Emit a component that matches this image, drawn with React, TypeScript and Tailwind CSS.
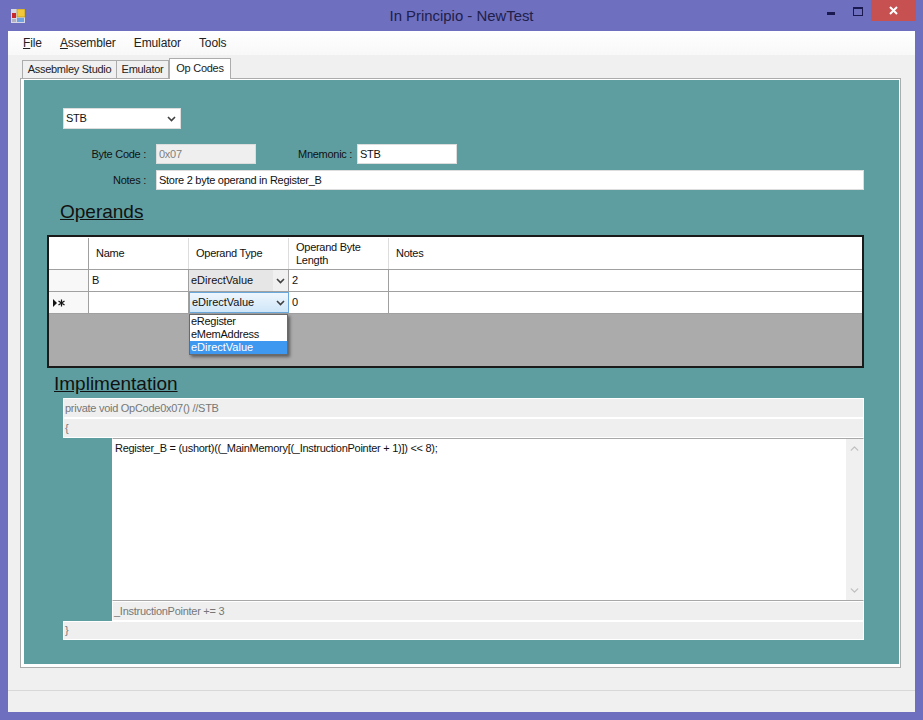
import { ChevronDown, ChevronUp } from 'lucide-react'

const font = "[font-family:'Liberation_Sans',Arial,sans-serif]"

function Chevron() {
  return (
    <svg width="9" height="6" viewBox="0 0 9 6" className="shrink-0">
      <path d="M1 1 L4.5 4.5 L8 1" fill="none" stroke="#404040" strokeWidth="1.6" />
    </svg>
  )
}

function TextBox({ className, value, disabled }: { className: string; value: string; disabled?: boolean }) {
  return (
    <div
      className={`flex h-[20px] items-center border border-[#ddd] pl-[2px] ${disabled ? 'bg-[#efefef] text-[#808080]' : 'bg-white text-[#111]'} ${className}`}
    >
      {value}
    </div>
  )
}

function GreyLine({ text, className }: { text: string; className: string }) {
  return (
    <div className={`flex items-center border border-[#fff] bg-[#efefef] pl-[1px] text-[#777] ${className}`}>
      {text}
    </div>
  )
}

const cols = 'grid grid-cols-[40px_100px_100px_100px_1fr]'

export default function App() {
  return (
    <div className={`flex h-[720px] w-[923px] flex-col overflow-hidden bg-[#6f6fbf] text-[11px] tracking-[-0.27px] text-[#111] ${font}`}>
      {/* title bar */}
      <div className="relative flex h-[31px] shrink-0 items-start">
        <svg width="14" height="14" viewBox="0 0 14 14" className="ml-[11px] mt-[9px]">
          <rect x="0" y="0" width="14" height="14" fill="#d8d8e4" />
          <rect x="6" y="0" width="8" height="8" fill="#f2c83a" stroke="#a88a20" strokeWidth="0.6" />
          <rect x="1" y="4" width="4" height="5" fill="#c8282c" />
          <rect x="6" y="9" width="7" height="4" fill="#6fa0e0" />
          <rect x="1" y="10" width="4" height="3" fill="#b0b0c0" />
        </svg>
        <div className="absolute inset-x-0 top-[8px] text-center text-[14.9px] leading-[16px] tracking-normal text-[#20204a]">In Principio - NewTest</div>
        <div className="ml-auto flex items-start">
          <div className="mr-[18px] mt-[12px] h-[3px] w-[8px] bg-[#1a1a50]" />
          <div className="mr-[8px] mt-[7px] h-[9px] w-[10px] border border-t-2 border-[#1a1a50]" />
          <div className="mr-[7px] flex h-[21px] w-[45px] items-center justify-center bg-[#c75050]">
            <svg width="9" height="9" viewBox="0 0 9 9">
              <path d="M1 1 L8 8 M8 1 L1 8" stroke="#fff" strokeWidth="2" />
            </svg>
          </div>
        </div>
      </div>

      {/* client area */}
      <div className="mx-[8px] mb-[8px] flex min-h-0 flex-1 flex-col bg-[#f0f0f0]">
        <div className="flex h-[24px] shrink-0 items-center gap-[18px] bg-gradient-to-b from-white to-[#f8f8f8] pl-[15px] text-[12px] tracking-[-0.1px] text-[#222]">
          <span><span className="underline">F</span>ile</span>
          <span><span className="underline">A</span>ssembler</span>
          <span>Emulator</span>
          <span>Tools</span>
        </div>

        {/* tabs */}
        <div className="z-10 -mb-[1px] mt-[3px] flex h-[21px] shrink-0 items-end pl-[14px] text-[#222]">
          <div className="mb-[1px] flex h-[18px] w-[95px] items-center justify-center border border-b-0 border-[#acacac] bg-[#f0f0f0]">Assebmley Studio</div>
          <div className="mb-[1px] flex h-[18px] w-[52px] items-center justify-center border border-b-0 border-l-0 border-[#acacac] bg-[#f0f0f0]">Emulator</div>
          <div className="flex h-[21px] w-[62px] items-center justify-center border border-b-0 border-[#acacac] bg-white pb-[1px]">Op Codes</div>
        </div>

        {/* tab page */}
        <div className="mx-[12px] h-[590px] w-[881px] shrink-0 border border-[#acacac] bg-white pb-[3px] pl-[3px] pr-[1px] pt-[1px]">
          <div className="relative h-[584px] bg-[#5f9ea0] pl-[39px] pt-[28px]">
            <div className="flex h-[21px] w-[118px] items-center justify-between border border-[#ddd] bg-white pl-[2px] pr-[4px]">
              STB
              <Chevron />
            </div>

            <div className="mt-[15px] flex items-center">
              <div className="w-[83px] whitespace-nowrap text-right">Byte Code :</div>
              <TextBox className="ml-[10px] w-[100px]" value="0x07" disabled />
              <div className="ml-[42px] w-[59px] whitespace-nowrap">Mnemonic :</div>
              <TextBox className="w-[100px]" value="STB" />
            </div>
            <div className="mt-[6px] flex items-center">
              <div className="w-[83px] text-right">Notes :</div>
              <TextBox className="ml-[10px] w-[708px]" value="Store 2 byte operand in Register_B" />
            </div>

            <div className="ml-[-3px] mt-[11px] text-[19px] leading-[22px] tracking-normal text-[#111] underline">Operands</div>

            {/* operands grid */}
            <div className="relative ml-[-16px] mt-[12px] h-[133px] w-[817px] border-2 border-[#1a1a1a] bg-[#ababab]">
              <div className={`${cols} h-[33px] border-b border-[#a0a0a0] bg-white pt-[1px]`}>
                <div className="border-r border-[#a0a0a0]" />
                <div className="flex items-center border-r border-[#ddd] pl-[7px]">Name</div>
                <div className="flex items-center border-r border-[#ddd] pl-[7px]">Operand Type</div>
                <div className="flex items-center border-r border-[#ddd] pl-[7px] leading-[13px]">
                  Operand Byte<br />Length
                </div>
                <div className="flex items-center pl-[7px]">Notes</div>
              </div>
              <div className={`${cols} h-[22px] border-b border-[#a0a0a0] bg-white`}>
                <div className="border-r border-[#a0a0a0] bg-[#f8f8f8]" />
                <div className="flex items-center border-r border-[#a0a0a0] pl-[3px]">B</div>
                <div className="flex items-stretch border-r border-[#a0a0a0] bg-[#e6e6e6] tracking-normal">
                  <div className="flex flex-1 items-center pl-[2px]">eDirectValue</div>
                  <div className="flex w-[15px] items-center justify-center bg-[#f0f0f0]">
                    <Chevron />
                  </div>
                </div>
                <div className="flex items-center border-r border-[#a0a0a0] pl-[3px]">2</div>
                <div />
              </div>
              <div className={`${cols} h-[22px] border-b border-[#a0a0a0] bg-white`}>
                <div className="flex items-center border-r border-[#a0a0a0] bg-[#f8f8f8] pl-[4px] text-[10px] leading-none">
                  <svg width="13" height="8" viewBox="0 0 13 8">
                    <path d="M0 0 L4 4 L0 8 Z" fill="#111" />
                    <path d="M8.5 0.5 V7.5 M5.5 2 L11.5 6 M11.5 2 L5.5 6" stroke="#111" strokeWidth="1.2" />
                  </svg>
                </div>
                <div className="border-r border-[#a0a0a0]" />
                <div className="flex items-center justify-between border border-[#6aa8dc] bg-gradient-to-b from-[#eef6fd] to-[#cfe6f8] pl-[2px] pr-[3px] tracking-normal">
                  eDirectValue
                  <Chevron />
                </div>
                <div className="flex items-center border-r border-[#a0a0a0] pl-[3px]">0</div>
                <div />
              </div>

              {/* open dropdown */}
              <div className="absolute left-[140px] top-[77px] z-10 w-[99px] border border-[#6a6a6a] bg-white leading-[13px] shadow-[2px_2px_3px_rgba(0,0,0,0.45)]">
                <div className="pl-[1px]">eRegister</div>
                <div className="pl-[1px]">eMemAddress</div>
                <div className="bg-[#3f98ef] pl-[1px] tracking-normal text-white">eDirectValue</div>
              </div>
            </div>

            <div className="ml-[-9px] mt-[5px] text-[19px] leading-[22px] tracking-normal text-[#111] underline">Implimentation</div>

            {/* code */}
            <div className="mt-[3px] w-[801px]">
              <GreyLine text="private void OpCode0x07() //STB" className="h-[20px]" />
              <GreyLine text="{" className="h-[20px]" />
              <div className="ml-[49px] flex h-[163px] border border-x-[#fff] border-y-[#a8a8a8] bg-white">
                <div className="flex-1 pl-[2px] pt-[1px]">Register_B = (ushort)((_MainMemory[(_InstructionPointer + 1)]) &lt;&lt; 8);</div>
                <div className="flex w-[17px] flex-col items-center justify-between bg-[#f0f0f0] py-[3px] text-[#c0c0c0]">
                  <ChevronUp size={13} strokeWidth={2.5} />
                  <ChevronDown size={13} strokeWidth={2.5} />
                </div>
              </div>
              <GreyLine text="_InstructionPointer += 3" className="ml-[49px] h-[20px]" />
              <GreyLine text="}" className="h-[19px]" />
            </div>
          </div>
        </div>

        {/* status bar */}
        <div className="mt-[22px] flex-1 border-t border-[#d8d8d8]" />
      </div>
    </div>
  )
}
